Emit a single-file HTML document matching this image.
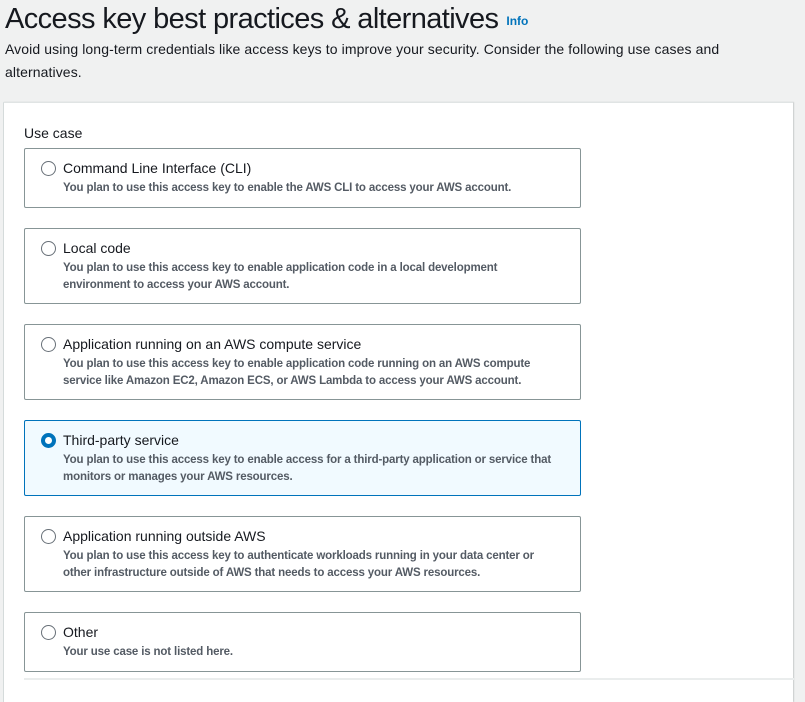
<!DOCTYPE html>
<html><head><meta charset="utf-8"><style>
*{margin:0;padding:0;box-sizing:border-box}
html,body{width:805px;height:681px;overflow:hidden;background:#f0f1f1;font-family:"Liberation Sans",sans-serif;color:#16191f}
.t{position:absolute;left:5px;top:1px;font-size:29px;letter-spacing:-0.6px;white-space:nowrap;line-height:36px}
.t a{font-size:12px;font-weight:bold;color:#0073bb;letter-spacing:0;margin-left:8px;vertical-align:3px}
.d{position:absolute;left:5px;top:38px;width:740px;font-size:14px;line-height:23px;color:#16191f;letter-spacing:0.1px}
.p{position:absolute;left:3px;top:102px;width:790px;height:600px;background:#fff;border-left:1px solid #d5dbdb;border-top:1px solid #e0e4e4;box-shadow:1px 0 1px #c9cccc}
.uc{position:absolute;left:24px;top:124px;font-size:14px;line-height:18px}
.b{position:absolute;left:24px;width:557px;border:1px solid #879596;border-radius:2px;background:#fff}
.b.s{background:#f1faff;border-color:#0073bb}
.r{position:absolute;left:16px;top:12px;width:15px;height:15px;border:1.5px solid #687078;border-radius:50%;background:#fff}
.b.s .r{border:4px solid #0073bb}
.h{position:absolute;left:38px;top:10px;font-size:14px;line-height:18px;white-space:nowrap}
.x{position:absolute;left:38px;top:31px;width:497px;font-size:11.5px;line-height:16.5px;color:#545b64;font-weight:bold;letter-spacing:-0.15px}
.line{position:absolute;left:24px;top:678px;width:770px;height:2px;background:#eaeded}
</style></head><body>
<div class="t">Access key best practices &amp; alternatives<a>Info</a></div>
<div class="d">Avoid using long-term credentials like access keys to improve your security. Consider the following use cases and alternatives.</div>
<div class="p"></div>
<div class="uc">Use case</div>
<div class="b" style="top:148px;height:60px"><div class="r"></div><div class="h">Command Line Interface (CLI)</div><div class="x">You plan to use this access key to enable the AWS CLI to access your AWS account.</div></div>
<div class="b" style="top:228px;height:76px"><div class="r"></div><div class="h">Local code</div><div class="x">You plan to use this access key to enable application code in a local development environment to access your AWS account.</div></div>
<div class="b" style="top:324px;height:76px"><div class="r"></div><div class="h">Application running on an AWS compute service</div><div class="x">You plan to use this access key to enable application code running on an AWS compute service like Amazon EC2, Amazon ECS, or AWS Lambda to access your AWS account.</div></div>
<div class="b s" style="top:420px;height:76px"><div class="r"></div><div class="h">Third-party service</div><div class="x">You plan to use this access key to enable access for a third-party application or service that monitors or manages your AWS resources.</div></div>
<div class="b" style="top:516px;height:76px"><div class="r"></div><div class="h">Application running outside AWS</div><div class="x">You plan to use this access key to authenticate workloads running in your data center or other infrastructure outside of AWS that needs to access your AWS resources.</div></div>
<div class="b" style="top:612px;height:60px"><div class="r"></div><div class="h">Other</div><div class="x">Your use case is not listed here.</div></div>
<div class="line"></div>
</body></html>
